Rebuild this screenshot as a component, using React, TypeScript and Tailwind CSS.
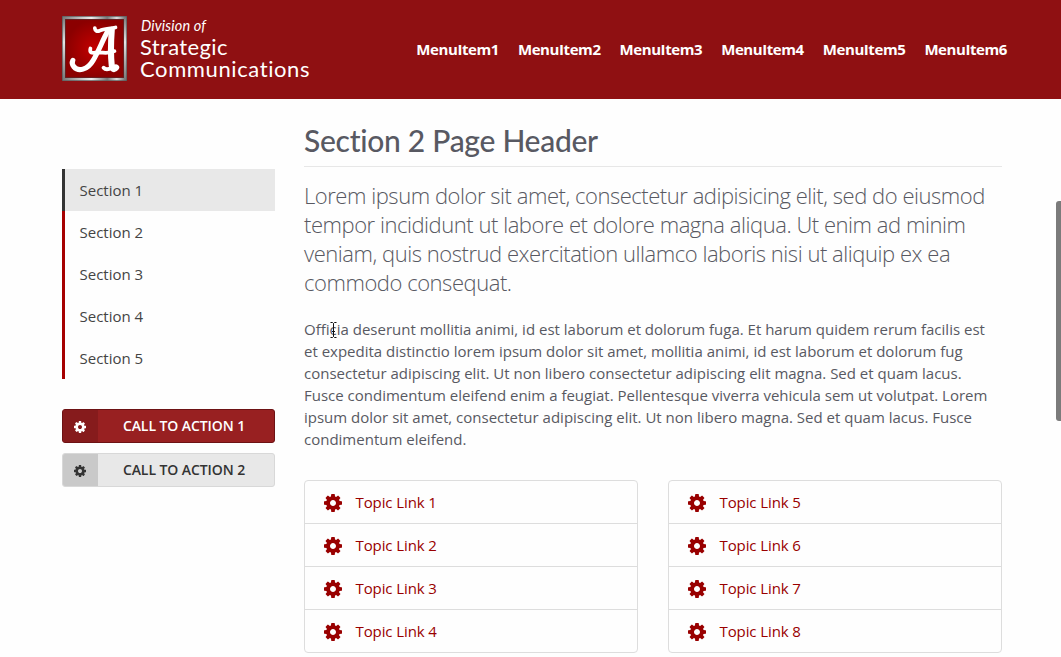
const COG =
  "M1024 640q0-106-75-181t-181-75-181 75-75 181 75 181 181 75 181-75 75-181zM1536 531v222q0 12-8 23t-20 13l-185 28q-19 54-39 91 35 50 107 138 10 12 10 25t-9 23q-27 37-99 108t-94 71q-12 0-26-9l-138-108q-44 23-91 38-16 136-29 186-7 28-36 28h-222q-14 0-24.5-8.5t-11.5-21.5l-28-184q-49-16-90-37l-141 107q-10 9-25 9-14 0-25-11-126-114-165-168-7-10-7-23 0-12 8-23 15-21 51-66.5t54-70.5q-27-50-41-99l-183-27q-13-2-21-12.5t-8-23.5v-222q0-12 8-23t19-13l186-28q14-46 39-92-40-57-107-138-10-12-10-24 0-10 9-23 26-36 98.5-107.5t94.5-71.5q13 0 26 10l138 107q44-23 91-38 16-136 29-186 7-28 36-28h222q14 0 24.5 8.5t11.5 21.5l28 184q49 16 90 37l142-107q9-9 24-9 13 0 25 10 129 119 165 170 7 8 7 22 0 12-8 23-15 21-51 66.5t-54 70.5q26 50 41 98l183 28q13 2 21 12.5t8 23.5z";

function Cog({ className }: { className: string }) {
  return (
    <svg viewBox="0 -128 1536 1536" fill="currentColor" className={className} aria-hidden="true">
      <path d={COG} />
    </svg>
  );
}

function Emblem() {
  return (
    <svg viewBox="0 0 192 192" className="mt-4 size-[65px] shrink-0" aria-hidden="true">
      <defs>
        <linearGradient id="frame" x1="0" y1="0" x2="1" y2="0">
          <stop offset="0" stopColor="#777" />
          <stop offset=".25" stopColor="#bbb" />
          <stop offset=".45" stopColor="#eee" />
          <stop offset=".7" stopColor="#777" />
          <stop offset=".85" stopColor="#ddd" />
          <stop offset="1" stopColor="#666" />
        </linearGradient>
        <linearGradient id="side" x1="0" y1="0" x2="0" y2="1">
          <stop offset="0" stopColor="#777" />
          <stop offset=".4" stopColor="#e5e5e5" />
          <stop offset=".7" stopColor="#aaa" />
          <stop offset="1" stopColor="#777" />
        </linearGradient>
        <radialGradient id="glow">
          <stop offset="0" stopColor="#c40000" />
          <stop offset="1" stopColor="#8b0000" />
        </radialGradient>
      </defs>
      <rect width="192" height="192" fill="#555" />
      <rect x="2" y="2" width="188" height="188" fill="url(#side)" />
      <path d="M2 2H190L182 10H10ZM2 190H190L182 182H10Z" fill="url(#frame)" />
      <rect x="9" y="9" width="174" height="174" fill="#65191a" />
      <rect x="12" y="12" width="168" height="168" fill="url(#glow)" />
      <g fill="none" stroke="#fff" strokeLinecap="round" strokeLinejoin="round">
        <path d="M97 36C98 45 104 47 112 43C124 37 141 38 158 34" strokeWidth="11" />
        <path d="M147 41C144 81 144 119 147 147C149 159 155 159 160 152" strokeWidth="18" />
        <path d="M137 42C122 66 108 105 92 131C75 160 48 165 35 150C30 144 29 137 32 131" strokeWidth="15" />
        <path d="M84 96C80 112 91 109 105 108C121 107 137 113 155 104" strokeWidth="11" />
        <path d="M123 153C129 160 138 158 148 153" strokeWidth="12" />
      </g>
    </svg>
  );
}

function TopicList({ start }: { start: number }) {
  return (
    <ul className="flex-1 divide-y divide-[#ddd] rounded border border-[#ddd] bg-[#fefefe]">
      {[0, 1, 2, 3].map((n) => (
        <li key={n}>
          <a href="#" className="flex h-[42px] items-center gap-[14px] pl-[18.5px] text-[15px] tracking-[-0.1px] text-[#900]">
            <Cog className="mt-[2px] size-[18px]" />
            Topic Link {start + n}
          </a>
        </li>
      ))}
    </ul>
  );
}

export default function App() {
  return (
    <div className="relative h-[657px] w-[1061px] overflow-hidden bg-[#fefefe] font-['Open_Sans',sans-serif] text-[#585962]">
      <header className="flex h-[99px] bg-[#8f1012] pl-[62px] text-white">
        <Emblem />
        <div className="ml-[13px] w-[180px] pt-[18px] font-['Lato',sans-serif] whitespace-nowrap">
          <div className="pl-[1px] text-[14.5px] leading-4 tracking-[0.15px] italic">Division of</div>
          <div className="pt-[2px] text-[22px] leading-[22px] tracking-[0.35px]">Strategic</div>
          <div className="text-[22px] leading-[22px] tracking-[0.6px]">Communications</div>
        </div>
        <nav className="ml-auto flex h-[99px] items-center gap-[19px] pr-[54px] text-[15px] font-bold tracking-[-0.42px]">
          {[1, 2, 3, 4, 5, 6].map((n) => (
            <a key={n} href="#">MenuItem{n}</a>
          ))}
        </nav>
      </header>

      <div className="flex pl-[62px]">
        <aside className="w-[213px] shrink-0 pt-[70px]">
          <ul className="text-[15px] text-[#444]">
            {[1, 2, 3, 4, 5].map((n) => (
              <li
                key={n}
                className={
                  n === 1
                    ? "flex h-[42px] items-center border-l-3 border-[#333] bg-[#e8e8e8] pl-[14.5px]"
                    : "flex h-[42px] items-center border-l-3 border-[#a60000] pl-[14.5px]"
                }
              >
                Section {n}
              </li>
            ))}
          </ul>
          <a href="#" className="mt-[30px] flex h-[34px] overflow-hidden rounded-[3px] border border-[#6d1214] bg-[#982021] text-[14px] font-semibold tracking-[-0.08px] text-white">
            <span className="flex w-[35px] items-center justify-center bg-[#861b1c] pt-[2px] pr-[1px]"><Cog className="size-3" /></span>
            <span className="flex flex-1 items-center justify-center pr-[4px] pb-[2px]">CALL TO ACTION 1</span>
          </a>
          <a href="#" className="mt-[10px] flex h-[34px] overflow-hidden rounded-[3px] border border-[#d8d8d8] bg-[#e8e8e8] text-[14px] font-semibold tracking-[-0.08px] text-[#333]">
            <span className="flex w-[35px] items-center justify-center bg-[#c9c9c9] pt-[2px] pr-[1px]"><Cog className="size-3" /></span>
            <span className="flex flex-1 items-center justify-center pr-[4px] pb-[2px]">CALL TO ACTION 2</span>
          </a>
        </aside>

        <main className="ml-[29px] w-[698px]">
          <h1 className="h-[68px] border-b border-[#e7e7e7] pt-[21px] font-['Lato',sans-serif] text-[30px] leading-10 font-medium tracking-[-0.28px] whitespace-nowrap">
            Section 2 Page Header
          </h1>
          <p className="mt-[14px] text-[22px] leading-[29px] font-light tracking-[-0.46px] whitespace-nowrap">
            Lorem ipsum dolor sit amet, consectetur adipisicing elit, sed do eiusmod<br />
            tempor incididunt ut labore et dolore magna aliqua. Ut enim ad minim<br />
            veniam, quis nostrud exercitation ullamco laboris nisi ut aliquip ex ea<br />
            commodo consequat.
          </p>
          <p className="mt-[21px] text-[15px] leading-[22px] whitespace-nowrap">
            Officia deserunt mollitia animi, id est laborum et dolorum fuga. Et harum quidem rerum facilis est<br />
            et expedita distinctio lorem ipsum dolor sit amet, mollitia animi, id est laborum et dolorum fug<br />
            consectetur adipiscing elit. Ut non libero consectetur adipiscing elit magna. Sed et quam lacus.<br />
            Fusce condimentum eleifend enim a feugiat. Pellentesque viverra vehicula sem ut volutpat. Lorem<br />
            ipsum dolor sit amet, consectetur adipiscing elit. Ut non libero magna. Sed et quam lacus. Fusce<br />
            condimentum eleifend.
          </p>
          <div className="mt-[30px] flex gap-[30px]">
            <TopicList start={1} />
            <TopicList start={5} />
          </div>
        </main>
      </div>

      <svg viewBox="0 0 7 16" className="absolute top-[322px] left-[330px] h-4 w-[7px]" aria-hidden="true">
        <path d="M.5.5H2.5L3.5 1.5L4.5.5H6.5M3.5 1.5V14.5M2 9.5H5M.5 15.5H2.5L3.5 14.5L4.5 15.5H6.5" fill="none" stroke="#111" />
      </svg>
      <div className="absolute top-[201px] right-0 h-[220px] w-[5px] rounded-l-[3px] bg-[#7b7b7b]" />
    </div>
  );
}
